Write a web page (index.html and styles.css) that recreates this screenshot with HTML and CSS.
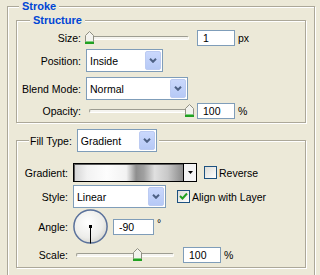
FILE: index.html
```html
<!DOCTYPE html>
<html>
<head>
<meta charset="utf-8">
<link rel="stylesheet" href="styles.css">
</head>
<body>
<fieldset class="group outer">
  <legend class="title outer-title">Stroke</legend>

  <fieldset class="group structure">
    <legend class="title structure-title">Structure</legend>
    <div class="rows">
      <div class="row">
        <span class="label">Size:</span>
        <div class="slider slider-s">
          <div class="track"></div>
          <span class="thumb" style="left:0px"><svg width="9" height="13" viewBox="0 0 9 13"><path d="M0.5 4.5 L4.5 0.5 L8.5 4.5 V12.5 H0.5 Z" fill="#f3f3ee" stroke="#909083"/><rect x="1" y="10" width="7" height="1" fill="#7fd27f"/><rect x="0" y="11" width="9" height="2" fill="#21a121"/></svg></span>
        </div>
        <span class="field field-s">1</span><span class="unit">px</span>
      </div>
      <div class="row">
        <span class="label">Position:</span>
        <div class="combo combo-pos"><span class="combo-text">Inside</span><span class="combo-btn"><svg width="8" height="5" viewBox="0 0 8 5"><polyline points="1,0.8 4,3.8 7,0.8" fill="none" stroke="#4d6185" stroke-width="2"/></svg></span></div>
      </div>
      <div class="row row-blend">
        <span class="label">Blend Mode:</span>
        <div class="combo combo-blend"><span class="combo-text">Normal</span><span class="combo-btn"><svg width="8" height="5" viewBox="0 0 8 5"><polyline points="1,0.8 4,3.8 7,0.8" fill="none" stroke="#4d6185" stroke-width="2"/></svg></span></div>
      </div>
      <div class="row">
        <span class="label">Opacity:</span>
        <div class="slider slider-s">
          <div class="track"></div>
          <span class="thumb" style="left:100px"><svg width="9" height="13" viewBox="0 0 9 13"><path d="M0.5 4.5 L4.5 0.5 L8.5 4.5 V12.5 H0.5 Z" fill="#f3f3ee" stroke="#909083"/><rect x="1" y="10" width="7" height="1" fill="#7fd27f"/><rect x="0" y="11" width="9" height="2" fill="#21a121"/></svg></span>
        </div>
        <span class="field field-s">100</span><span class="unit">%</span>
      </div>
    </div>
  </fieldset>

  <fieldset class="group fill">
    <legend class="fill-legend"><span class="legend-inner"><span>Fill Type:</span><span class="combo combo-fill"><span class="combo-text">Gradient</span><span class="combo-btn"><svg width="8" height="5" viewBox="0 0 8 5"><polyline points="1,0.8 4,3.8 7,0.8" fill="none" stroke="#4d6185" stroke-width="2"/></svg></span></span></span></legend>
    <div class="rows">
      <div class="row">
        <span class="label">Gradient:</span>
        <div class="grad"><span class="grad-bar"></span><span class="grad-btn"><svg width="5" height="3" viewBox="0 0 5 3"><polygon points="0,0 5,0 2.5,3" fill="#000"/></svg></span></div>
        <span class="check check-rev"></span><span class="check-label">Reverse</span>
      </div>
      <div class="row">
        <span class="label">Style:</span>
        <div class="combo combo-style"><span class="combo-text">Linear</span><span class="combo-btn"><svg width="8" height="5" viewBox="0 0 8 5"><polyline points="1,0.8 4,3.8 7,0.8" fill="none" stroke="#4d6185" stroke-width="2"/></svg></span></div>
        <span class="check check-align"><svg width="11" height="11" viewBox="0 0 11 11"><path d="M2 5 L4.5 7.5 L9 2.5" fill="none" stroke="#21a121" stroke-width="2"/></svg></span><span class="check-label">Align with Layer</span>
      </div>
      <div class="row row-angle">
        <span class="label">Angle:</span>
        <svg class="dial" width="35" height="35" viewBox="0 0 35 35"><defs><radialGradient id="dg" cx="0.42" cy="0.38" r="0.65"><stop offset="0" stop-color="#ffffff"/><stop offset="0.7" stop-color="#ededea"/><stop offset="1" stop-color="#d6d6d0"/></radialGradient></defs><circle cx="17.5" cy="17.5" r="16.6" fill="url(#dg)" stroke="#5a719b" stroke-width="1.5"/><line x1="17.5" y1="17.5" x2="17.5" y2="34.5" stroke="#000" stroke-width="1"/><rect x="16" y="16" width="3" height="3" fill="#000"/></svg>
        <span class="field field-angle">-90</span><span class="unit deg">°</span>
      </div>
      <div class="row">
        <span class="label">Scale:</span>
        <div class="slider slider-scale">
          <div class="track"></div>
          <span class="thumb" style="left:61px"><svg width="9" height="13" viewBox="0 0 9 13"><path d="M0.5 4.5 L4.5 0.5 L8.5 4.5 V12.5 H0.5 Z" fill="#f3f3ee" stroke="#909083"/><rect x="1" y="10" width="7" height="1" fill="#7fd27f"/><rect x="0" y="11" width="9" height="2" fill="#21a121"/></svg></span>
        </div>
        <span class="field field-scale">100</span><span class="unit">%</span>
      </div>
    </div>
  </fieldset>
</fieldset>
</body>
</html>
```
FILE: styles.css
```css
* { box-sizing: border-box; }
html, body { margin: 0; padding: 0; background: #ece9d8; }
body {
  width: 320px;
  height: 275px;
  overflow: hidden;
  font-family: "Liberation Sans", Arial, sans-serif;
  font-size: 10.5px;
  color: #000;
}
.group {
  margin: 0;
  min-width: 0;
  border: 1px solid #aca899;
  box-shadow: 1px 1px 0 #fff, inset 1px 1px 0 #fff;
}
.title {
  font-weight: bold;
  font-size: 11px;
  line-height: 13px;
  color: #0046d5;
  padding: 0 3px;
  background: #ece9d8;
}
.outer {
  margin-left: 7px;
  width: 308px;
  padding: 1px 8px 20px 8px;
}
.outer-title { margin-left: 3px; }
.structure { padding: 3px 0 3px 0; }
.structure-title { margin-left: 13px; }
.fill { margin-top: 6px; padding: 11px 0 4px 0; }
.fill-legend {
  margin-left: 12px;
  padding: 0 2px 0 1px;
  background: #ece9d8;
}
.legend-inner { display: flex; align-items: center; }
.rows { display: flex; flex-direction: column; gap: 3px; }
.row { display: flex; align-items: center; }
.label { flex: none; text-align: right; margin-right: 5px; }
.structure .label { width: 64px; }
.fill .label { width: 51px; }
.row-blend { margin-top: 2px; }
.row-angle { margin-top: -2px; }

/* slider */
.slider { position: relative; height: 16px; display: flex; align-items: center; flex: none; }
.slider-s { width: 109px; margin-left: -1px; }
.slider-scale { width: 107px; margin-left: -1px; }
.track {
  flex: 1;
  margin: 0 5px 0 4px;
  height: 4px;
  border: 1px solid;
  border-color: #9d9d92 #ffffff #ffffff #9d9d92;
  border-radius: 2px;
  background: #f5f4ef;
}
.thumb { position: absolute; top: 1px; width: 9px; height: 13px; display: block; }
.thumb svg { display: block; }

/* fields */
.field {
  flex: none;
  height: 16px;
  border: 1px solid #7f9db9;
  background: #fff;
  padding-left: 5px;
  display: flex;
  align-items: center;
}
.field-s { width: 38px; margin-left: 3px; }
.field-angle { width: 41px; margin-left: 5px; }
.field-scale { width: 38px; margin-left: 4px; }
.unit { margin-left: 3px; }
.deg { margin-left: 3px; align-self: flex-start; margin-top: 8px; }

/* combo */
.combo {
  flex: none;
  display: flex;
  height: 23px;
  border: 1px solid #7f9db9;
  background: #fff;
  padding: 1px;
}
.combo-text { flex: 1; display: flex; align-items: center; padding-left: 2px; }
.combo-btn {
  width: 16px;
  flex: none;
  display: flex;
  align-items: center;
  justify-content: center;
  border: 1px solid #bccbf2;
  border-radius: 2px;
  background: linear-gradient(#cad8fc, #b6c9f6);
}
.combo-btn svg { display: block; }
.combo-pos { width: 77px; }
.combo-blend { width: 102px; }
.combo-fill { width: 80px; margin-left: 5px; }
.combo-style { width: 93px; }

/* gradient swatch */
.grad {
  flex: none;
  width: 124px;
  height: 19px;
  display: flex;
  border: 1px solid #000;
  background: #f4f4f4;
}
.grad-bar {
  flex: 1;
  box-shadow: inset 1px 1px 0 #5a5a5a;
  background: linear-gradient(to right, #d4d4d4 0%, #f2f2f2 12%, #fdfdfd 30%, #f2f2f2 48%, #c8c8c8 52%, #8e8e8e 57%, #a0a0a0 64%, #e0e0e0 74%, #c8c8c8 86%, #8a8a8a 100%);
  border-right: 1px solid #000;
}
.grad-btn { width: 12px; display: flex; align-items: center; justify-content: center; }
.grad-btn svg { display: block; }

/* checkbox */
.check {
  flex: none;
  width: 13px;
  height: 13px;
  border: 1px solid #1c5180;
  background: linear-gradient(135deg, #dcdcd7, #ffffff);
  display: flex;
  align-items: center;
  justify-content: center;
}
.check svg { display: block; }
.check-rev { margin-left: 7px; }
.check-align { margin-left: 11px; }
.check-label { margin-left: 2px; }
.dial { display: block; flex: none; }
```
